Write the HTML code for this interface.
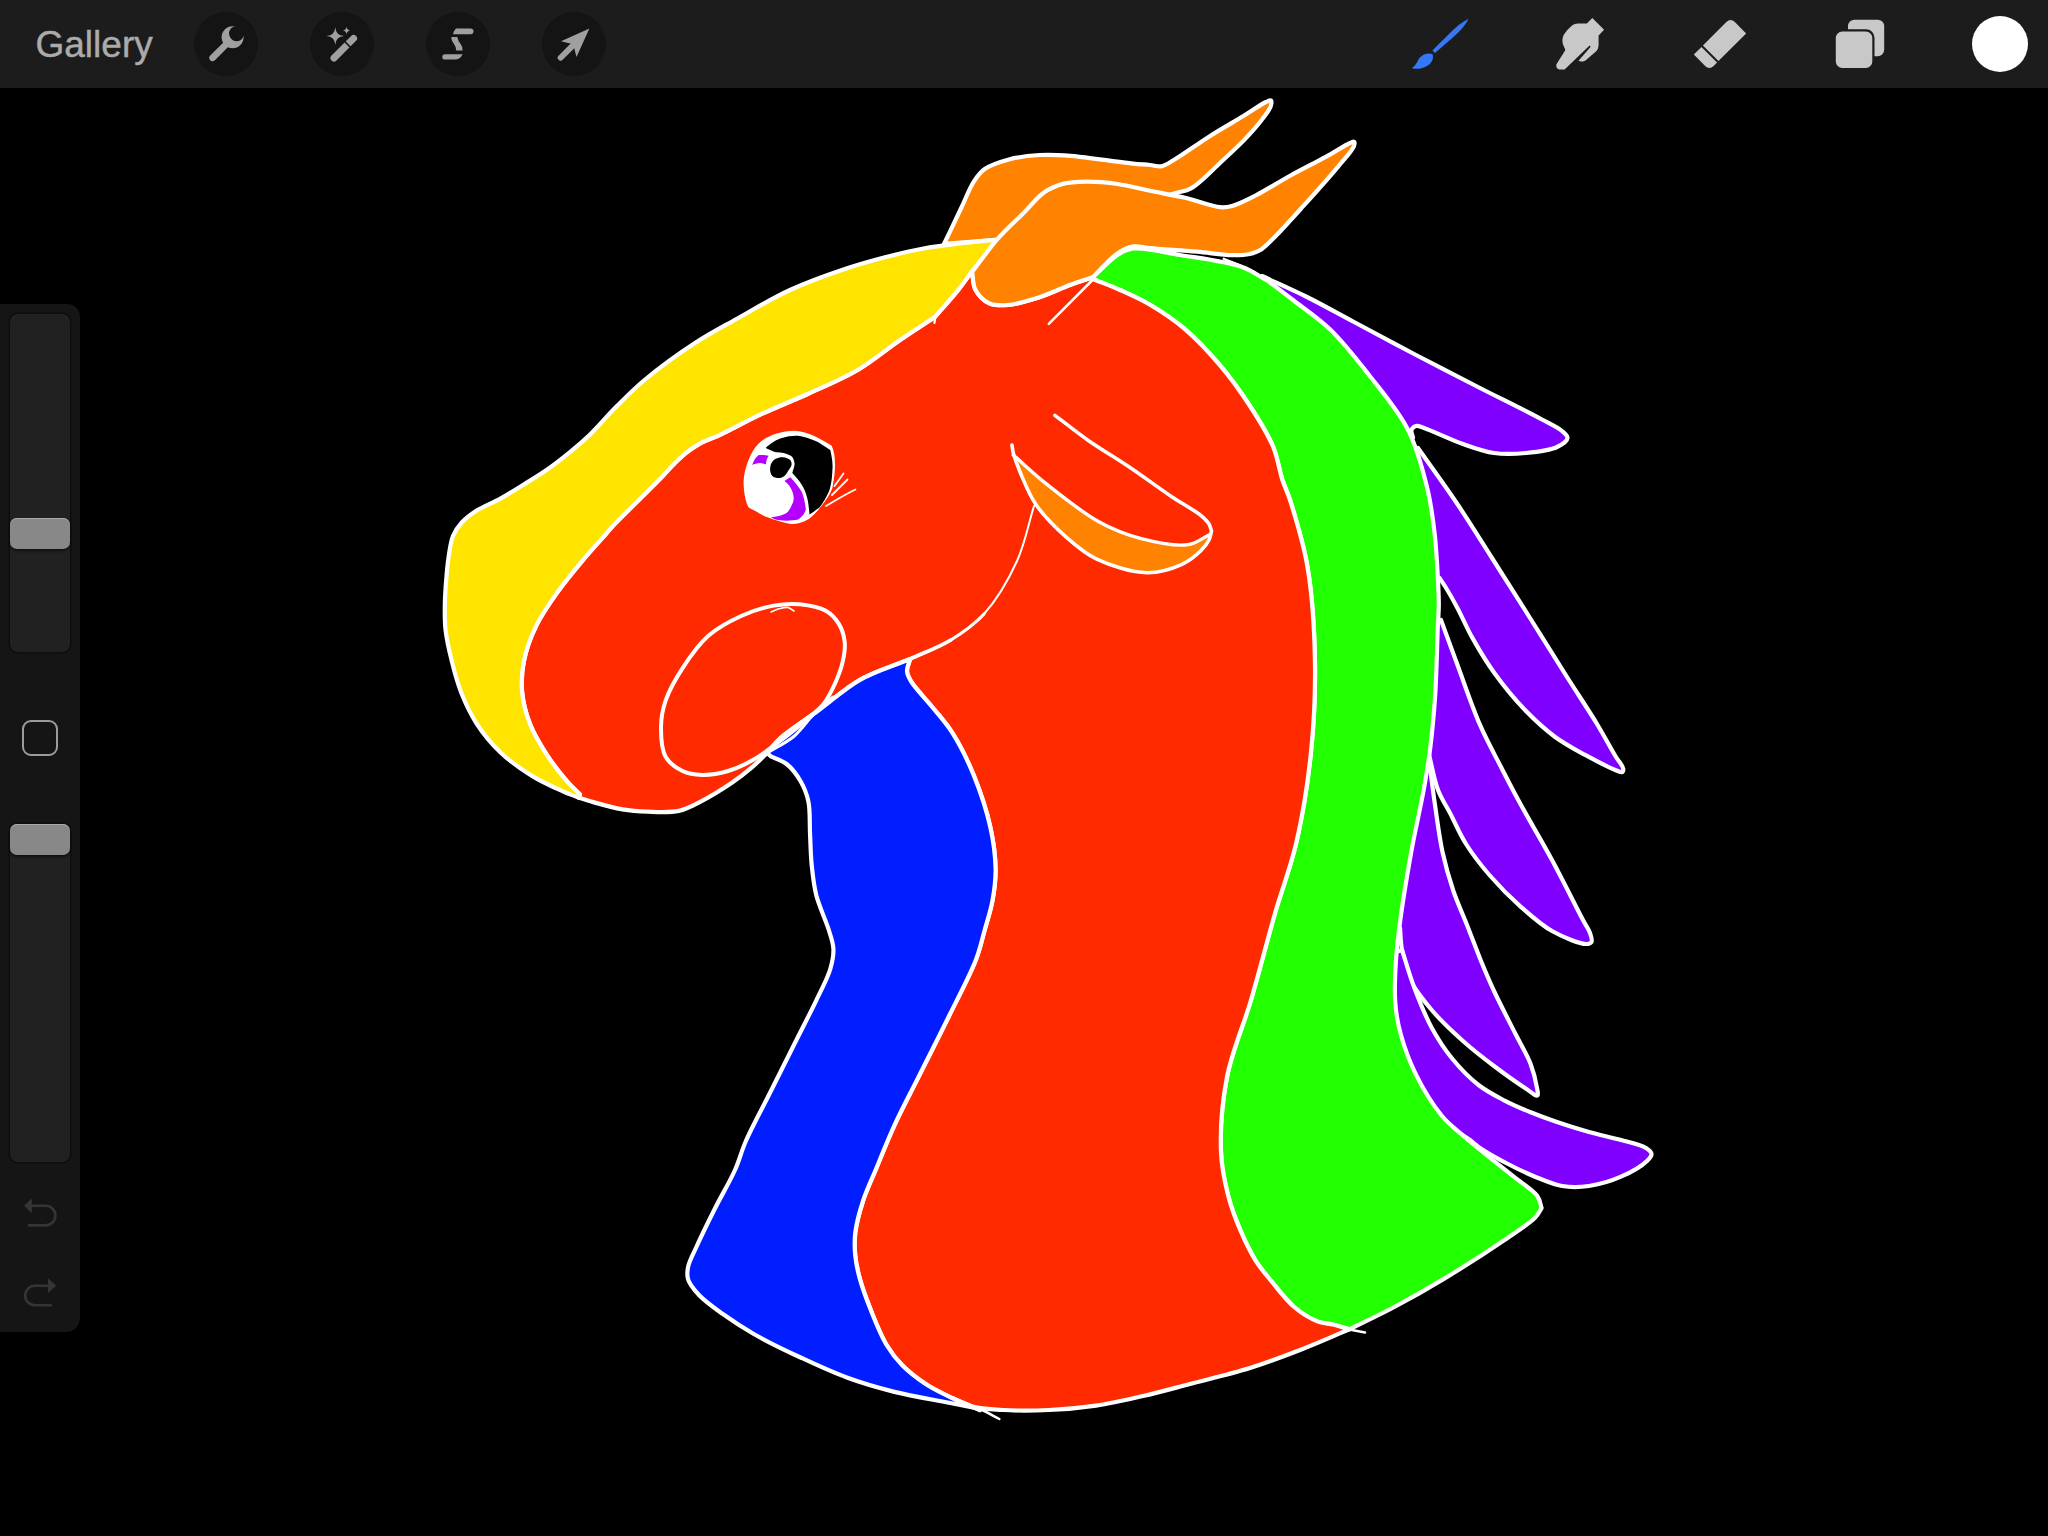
<!DOCTYPE html>
<html><head><meta charset="utf-8">
<style>
html,body{margin:0;padding:0;background:#000;width:2048px;height:1536px;overflow:hidden}
.top{position:absolute;left:0;top:0;width:2048px;height:88px;background:#1c1c1c}
.gal{position:absolute;left:35.5px;top:23px;font-family:"Liberation Sans",sans-serif;font-size:37px;color:#ababab;line-height:44px;white-space:nowrap;-webkit-text-stroke:0.45px #ababab}
svg{position:absolute;left:0;top:0}
.panel{position:absolute;left:0;top:304px;width:80px;height:1028px;background:#151515;border-radius:0 13px 14px 0}
.track{position:absolute;left:10px;width:60px;height:338px;background:#212121;border-radius:8px;box-shadow:0 0 0 1.5px #0e0e0e}
.thumb{position:absolute;left:10px;width:60px;height:31px;background:#888;border-radius:7px;box-shadow:inset 0 1px 0 #a8a8a8,0 2px 3px rgba(0,0,0,.55)}
.sq{position:absolute;left:22px;top:720px;width:36px;height:36px;box-sizing:border-box;border:2px solid #9c9c9c;border-radius:9px}
</style></head><body>
<div class="top"></div>
<div class="gal">Gallery</div>
<div class="panel"></div>
<div class="track" style="top:314px"></div>
<div class="thumb" style="top:518px"></div>
<div class="sq"></div>
<div class="track" style="top:824px"></div>
<div class="thumb" style="top:824px"></div>
<svg width="2048" height="1536" viewBox="0 0 2048 1536">
<g fill="#141414">
<circle cx="226" cy="44" r="32"/><circle cx="342" cy="44" r="32"/><circle cx="458" cy="44" r="32"/><circle cx="574" cy="44" r="32"/>
</g>
<g fill="#a0a0a0" stroke="none">
<!-- wrench -->
<mask id="wm"><rect x="190" y="10" width="80" height="70" fill="#fff"/><circle cx="236.6" cy="33.6" r="7.6" fill="#000"/></mask>
<circle cx="232.6" cy="37.2" r="11" mask="url(#wm)"/>
<line x1="212.6" y1="57.8" x2="229" y2="41.5" stroke="#a0a0a0" stroke-width="6.6" stroke-linecap="round"/>
<!-- wand -->
<line x1="334" y1="58" x2="353.6" y2="38.4" stroke="#a0a0a0" stroke-width="7" stroke-linecap="round"/>
<line x1="344.6" y1="41.4" x2="350.4" y2="47.2" stroke="#141414" stroke-width="1.6"/>
<path d="M335.3 27.2 Q335.9 35.4 344.1 36 Q335.9 36.6 335.3 44.8 Q334.7 36.6 326.5 36 Q334.7 35.4 335.3 27.2Z"/>
<path d="M346.6 26.6 Q346.9 30.3 350.6 30.6 Q346.9 30.9 346.6 34.6 Q346.3 30.9 342.6 30.6 Q346.3 30.3 346.6 26.6Z"/>
<!-- selection S -->
<path d="M456 28.4 L470.6 28.4 A2.9 2.9 0 0 1 470.6 34.2 L453 34.2 Q454 30 456 28.4Z"/>
<path d="M451.4 37 L457.3 37 Q458 41 460.6 44 Q463 47 462.6 50.6 L456.2 50.6 Q456.5 47.5 454 44 Q451 40 451.4 37Z"/>
<path d="M445 54.2 L462.6 54.2 Q460 59.6 455 59.6 L445 59.6 A2.7 2.7 0 0 1 445 54.2Z"/>
<!-- move arrow -->
<path d="M589.4 28.5 L561 41.3 L573.2 44.2 L576.5 57 Z"/>
<line x1="560.6" y1="57.8" x2="572" y2="46.4" stroke="#a0a0a0" stroke-width="5.8" stroke-linecap="round"/>
</g>
<!-- brush -->
<g fill="#3478f6">
<path d="M1468.3 19 C1467 23 1462 29 1454 36.5 L1435 53 L1432.4 50.6 L1450 33 C1458 25 1464 21 1468.3 19Z"/>
<path d="M1432.6 54.2 C1434.4 60 1430 66.4 1421.5 68.2 C1417 69.2 1413.5 69 1411.8 68.1 C1414.5 66.5 1416.5 63.5 1418 60.5 C1420.5 55.4 1426.5 52.2 1432.6 54.2Z"/>
</g>
<g fill="#c8c8c8">
<!-- smudge -->
<path d="M1559.6 69.4 Q1556 69 1556.3 64.4 L1565.4 50 L1563 44.5 Q1561.5 40.5 1563.6 35 Q1567.5 29 1572 25.4 Q1574.5 23.6 1578 23.6 L1586.8 23.4 L1592.3 18 L1604.1 29.8 L1598.6 35.6 L1598.6 45.4 Q1598.3 49.5 1596.2 51.2 L1585.5 60.4 Q1581 62.6 1578.5 60.8 L1590.3 47.2 Q1591 45.8 1589.6 45.4 L1564.6 69.4 Z"/>
<!-- eraser -->
<g transform="translate(1720,44) rotate(-45)">
<path d="M-26 -11 L-15.2 -11 L-15.2 11 L-20 11 Q-26 11 -26 5Z"/>
<path d="M-13.2 -11 L20 -11 Q26 -11 26 -5 L26 11 L-13.2 11Z"/>
</g>
<!-- layers -->
<rect x="1848" y="19.7" width="36.2" height="36.5" rx="6.5"/>
<rect x="1833.6" y="29.3" width="40.9" height="40.9" rx="8.5" fill="#1c1c1c"/><rect x="1835.8" y="31.5" width="36.5" height="36.5" rx="6.5"/>
</g>
<circle cx="2000" cy="44" r="28" fill="#fff"/>
<!-- undo / redo -->
<g fill="none" stroke="#353535" stroke-width="2.6">
<path d="M30 1205.8 L45.6 1205.8 A9.8 9.8 0 0 1 45.6 1225.4 L28 1225.4"/>
<path d="M50 1285.7 L35 1285.7 A9.8 9.8 0 0 0 35 1305.3 L51.8 1305.3"/>
</g>
<g fill="#353535">
<path d="M24.1 1205.5 L31.8 1198.5 L31.8 1213.2Z"/>
<path d="M56.2 1285.7 L48 1278.3 L48 1293Z"/>
</g>
<path d="M1262 276C1277 283 1291.9 289.5 1307 297C1322.6 304.8 1337.3 313.1 1354 322C1373.2 332.2 1395.2 344.1 1416 355C1436.9 365.9 1458.1 376.8 1479 387.5C1499.7 398.1 1525.9 410.8 1541 419C1549.9 423.8 1557.5 427.1 1562 431C1564.7 433.4 1567.7 435.6 1567.5 438C1567.2 440.9 1561.8 444.7 1557 447C1549.7 450.5 1536.5 452 1526 453C1515.5 454 1504.5 454.5 1494 453C1483.5 451.5 1473.8 447.8 1463 444C1450.6 439.7 1432.2 430.7 1424 428C1420.4 426.8 1418.2 425.5 1416 426C1414.1 426.5 1412.1 428.3 1411.5 430C1410.8 432 1412.5 435 1413 437.5L1390 440L1340 400L1290 320Z" fill="#8000ff" stroke="#fff" stroke-width="4.2" stroke-linejoin="round" stroke-linecap="round"/>
<path d="M1418 448C1431.3 467 1445.4 486.2 1458 505C1470 522.9 1480.4 539.8 1492 558C1504.3 577.4 1517.4 598.1 1530 618C1542.4 637.7 1555.3 658.5 1567 677C1577.5 693.6 1588.3 709.6 1597 724C1604.2 735.9 1611.1 749 1616 757C1618.8 761.7 1622.4 765.1 1623 768C1623.4 769.6 1623.4 771.4 1622.5 772C1621.3 772.8 1618.1 771 1614.7 769.7C1607.9 767 1594.6 760.1 1584.7 754.7C1574.6 749.2 1564.4 743.8 1554.8 736.7C1544.4 729 1534.4 719.8 1524.8 709.8C1514.4 699 1503.8 686.1 1494.9 673.8C1486.4 662.1 1478.9 649.5 1472.4 637.9C1466.6 627.6 1462.2 616.9 1457.4 607.9C1453.3 600.2 1448.9 592.5 1445.5 587C1443.2 583.3 1441.5 581 1439.5 578L1380 560L1380 470Z" fill="#8000ff" stroke="#fff" stroke-width="4.2" stroke-linejoin="round" stroke-linecap="round"/>
<path d="M1441 620C1446.5 634.9 1451.5 648.8 1457.4 664.8C1464.3 683.3 1471.9 706.4 1479.9 724.7C1487 741 1495.2 755.6 1502.4 769.7C1508.8 782.2 1513.9 792 1521 805C1529.9 821.4 1541.8 841.2 1552 860C1562.5 879.5 1576.3 907.3 1583 920C1586.1 925.9 1588.6 929 1590 933C1591.1 936.2 1592.5 940.2 1591.5 942C1590.7 943.4 1588.6 944 1586 944C1579.5 943.9 1562.7 937 1552 931C1540.8 924.7 1530.8 915.6 1520.6 906.6C1509.9 897.1 1498.7 885.8 1489.4 875C1480.7 864.9 1472.7 854.6 1466 844C1459.7 833.9 1455 822.6 1450 813C1445.7 804.8 1441.3 798.7 1438 790C1434.1 779.7 1432 766.5 1429 754.7L1380 740L1400 640Z" fill="#8000ff" stroke="#fff" stroke-width="4.2" stroke-linejoin="round" stroke-linecap="round"/>
<path d="M1430 767.5C1431.7 780 1433.1 791.8 1435 805C1437.2 819.8 1439.3 837.2 1442.5 852C1445.5 865.7 1449.2 878.6 1453.4 891C1457.4 902.8 1462.5 913.6 1467 925C1471.6 936.6 1476 948.7 1480.6 960C1485 970.7 1488.9 980 1494 991C1500.1 1004 1508.5 1020.1 1515 1033C1520.6 1044.1 1526.9 1054.1 1530.6 1064C1533.8 1072.3 1536 1082.2 1537 1088C1537.5 1091.2 1538.7 1094.8 1537.5 1095.5C1535.9 1096.5 1530 1091.3 1525 1088C1516.9 1082.7 1504.2 1073.7 1494 1066C1483.5 1058.1 1473.1 1050.1 1463 1041C1452.3 1031.5 1440.7 1020.5 1431.7 1010C1423.6 1000.5 1415.8 991.3 1410.8 981C1406.1 971.2 1403.8 959.5 1402 950C1400.5 942.1 1400.7 935.3 1400 928L1360 900L1390 790Z" fill="#8000ff" stroke="#fff" stroke-width="4.2" stroke-linejoin="round" stroke-linecap="round"/>
<path d="M1402 950C1406 962.3 1409.3 974.5 1414 987C1419.1 1000.4 1424.9 1015.3 1431.7 1027.7C1437.9 1039.1 1444.6 1049.4 1452.5 1059C1460.3 1068.5 1469.4 1077.9 1478.5 1085C1486.8 1091.5 1495.8 1096 1504.6 1100.6C1513 1105 1521.3 1108.5 1530 1112C1538.8 1115.6 1547.6 1118.8 1557 1122C1567.2 1125.5 1578.3 1129 1589 1132C1599.6 1135 1611 1137.2 1621 1140C1629.9 1142.5 1640.9 1144.7 1646 1148C1648.8 1149.8 1651.3 1151.8 1651.5 1154C1651.7 1156.2 1649.5 1158.5 1647 1161C1642.1 1165.7 1630.4 1172.6 1621 1176.7C1611.1 1181 1599.3 1184.5 1589 1186C1579.7 1187.3 1570.9 1187.5 1562 1186C1552.9 1184.5 1543.9 1180.3 1535 1176.7C1525.9 1173 1516.9 1168.6 1508 1164C1499 1159.4 1488.4 1153.6 1481.5 1149C1476.7 1145.8 1473.8 1143 1470 1140L1380 1080L1370 960Z" fill="#8000ff" stroke="#fff" stroke-width="4.2" stroke-linejoin="round" stroke-linecap="round"/>
<path d="M1093 277C1101.2 269.7 1109.9 259.8 1117.5 255C1122.9 251.6 1126.3 249.4 1133 248.5C1144.3 247 1163.3 252.2 1180 255C1199.3 258.2 1226.1 261.3 1242 267C1252.9 270.9 1259.3 276.3 1268 281C1276.3 287.3 1283.9 292.9 1293 300C1304.2 308.7 1318 317.8 1330 329.3C1343.5 342.3 1356.3 358.8 1369 375C1382.4 392.1 1398.2 410.5 1408 429.7C1417.2 447.9 1422.5 468.7 1427 487C1431 503.3 1432.9 518.3 1434.7 534C1436.5 549.6 1437.3 568.1 1438 581C1438.5 590 1438.8 596.3 1438.8 604C1438.8 611.8 1438.2 617.6 1437.8 627.5C1437.1 644.2 1436.6 673.7 1435.2 695C1433.9 714.3 1432.1 733.2 1430 750C1428.2 764.3 1426.4 774.8 1423.8 789.4C1420.4 807.9 1415.1 830.7 1411.2 852C1407.3 874.2 1402.9 900.3 1400.3 920C1398.3 935.1 1396.9 946.5 1396 960C1395.1 973.7 1394.3 988.8 1395.2 1001.7C1396 1012.9 1397.4 1022 1400.4 1033C1403.9 1046 1409.3 1061.1 1416 1074.6C1423 1088.8 1433.5 1105.6 1442 1116C1448.1 1123.4 1453.6 1127.3 1460 1133C1466.8 1139 1473.6 1144.5 1481.5 1151C1491.1 1158.9 1503.8 1168.7 1513.7 1176.7C1522.2 1183.6 1532.9 1189.7 1537.3 1196C1540.2 1200.1 1540.2 1204 1541.6 1208C1539.5 1211.2 1538.6 1214 1535.2 1217.5C1528.9 1224.1 1515.5 1232.4 1503 1241C1486.2 1252.5 1461.9 1268 1443 1279.4C1426.6 1289.3 1412 1297.6 1396.2 1306C1380.8 1314.3 1365 1321.6 1349.4 1329.4C1344.2 1327.8 1339 1326 1333.8 1324.7C1328.5 1323.4 1323.6 1323.8 1318 1321.6C1310.8 1318.8 1302 1313.6 1294.7 1307.5C1286.3 1300.5 1278.2 1289.4 1271.2 1281C1265.4 1273.9 1260.5 1268.4 1255.6 1260.6C1249.9 1251.5 1244.6 1240.2 1240 1229.4C1235.3 1218.4 1231.1 1207.3 1228 1195C1224.6 1181.6 1221.7 1168.4 1221 1152C1220.1 1130.5 1222.2 1101.9 1227 1077C1232 1051.2 1243.2 1026.4 1251 1000C1259.2 972.2 1266.9 941.5 1274.8 914C1282.1 888.6 1290.8 866.9 1296.7 841C1303.2 812.5 1308.2 780.4 1311.2 749.9C1314.3 719.6 1315.5 689.1 1314.9 658.7C1314.3 628.3 1312.3 595.5 1307.6 567.6C1303.5 543.2 1295 515.8 1290 500C1287.2 491.3 1284.9 487.6 1282.4 480C1279.2 470.3 1277.8 457.9 1273 446.5C1267.4 433.2 1258.3 418.8 1249.6 405.5C1240.7 391.8 1231 378.2 1220.3 365.6C1209.5 352.8 1197.4 339.7 1185.2 329.3C1173.9 319.7 1161.5 311.5 1150 304.7C1139.8 298.7 1129.8 294.4 1120 290C1110.8 285.9 1102 282.7 1093 279Z" fill="#22ff00" stroke="#fff" stroke-width="4.2" stroke-linejoin="round" stroke-linecap="round"/>
<path d="M972.2 272C973.2 277.8 972.6 284.3 975.3 289.4C978.1 294.8 983.8 300.8 989.4 303.4C994.8 305.9 1001 305.5 1008 305C1017.2 304.3 1029.1 300.5 1039.4 297.2C1049.9 293.8 1061 288.3 1070.6 284.7C1078.6 281.7 1085.5 279.6 1093 277L1093 279C1102 282.7 1110.8 285.9 1120 290C1129.8 294.4 1139.8 298.7 1150 304.7C1161.5 311.5 1173.9 319.7 1185.2 329.3C1197.4 339.7 1209.5 352.8 1220.3 365.6C1231 378.2 1240.7 391.8 1249.6 405.5C1258.3 418.8 1267.4 433.2 1273 446.5C1277.8 457.9 1279.2 470.3 1282.4 480C1284.9 487.6 1287.2 491.3 1290 500C1295 515.8 1303.5 543.2 1307.6 567.6C1312.3 595.5 1314.3 628.3 1314.9 658.7C1315.5 689.1 1314.3 719.6 1311.2 749.9C1308.2 780.4 1303.2 812.5 1296.7 841C1290.8 866.9 1282.1 888.6 1274.8 914C1266.9 941.5 1259.2 972.2 1251 1000C1243.2 1026.4 1232 1051.2 1227 1077C1222.2 1101.9 1220.1 1130.5 1221 1152C1221.7 1168.4 1224.6 1181.6 1228 1195C1231.1 1207.3 1235.3 1218.4 1240 1229.4C1244.6 1240.2 1249.9 1251.5 1255.6 1260.6C1260.5 1268.4 1265.4 1273.9 1271.2 1281C1278.2 1289.4 1286.3 1300.5 1294.7 1307.5C1302 1313.6 1310.8 1318.8 1318 1321.6C1323.6 1323.8 1328.5 1323.4 1333.8 1324.7C1339 1326 1344.2 1327.8 1349.4 1329.4C1332.9 1336.3 1316.6 1343.6 1300 1350C1283.5 1356.4 1267.5 1362.5 1250 1368C1231 1373.9 1208.8 1379.1 1190 1384C1173.4 1388.3 1158.7 1392.4 1143 1396C1127.4 1399.6 1111.7 1403.3 1096 1405.6C1080.4 1407.9 1064.6 1409.3 1049 1410C1033.5 1410.7 1016.5 1410.8 1002.5 1410C991 1409.3 980 1408.8 971 1406.4C963.7 1404.4 958.3 1400.8 952 1398L980 1410C970.7 1406 961.1 1402.4 952 1398C943 1393.7 933.9 1389.4 925.6 1384C917.3 1378.5 908.9 1372.1 902.2 1365.3C896 1359 891.4 1353 886.6 1345C880.8 1335.3 875.5 1321.9 871 1310.6C866.8 1300 862.7 1289.1 860 1279.4C857.7 1271.1 856.1 1263.8 855.3 1256C854.5 1248.2 854.3 1240.8 855.3 1232.5C856.5 1222.7 859.7 1211.3 863 1201C866.4 1190.5 870.9 1181.3 875.6 1170C881.2 1156.4 887.5 1140.3 894.4 1125.3C901.5 1109.7 909.4 1095.1 917.8 1078.4C927.4 1059.1 939.1 1036.3 949 1016C958.4 996.9 969.8 975.7 975.8 960C980 949.2 981.5 941.4 984.2 931.7C987.1 921.5 990.6 910.9 992.5 900.4C994.4 890.1 995.7 880.3 995.6 869.2C995.4 856.3 993.6 842 990.4 827.5C986.8 810.9 980.3 791.6 973.8 775.4C967.7 760.5 960.6 745.8 953 733.8C946.5 723.4 939.1 715.5 932 706.7C925.1 698.1 915.3 688.5 911.2 681.7C908.8 677.7 907.2 674.9 907 671.2C906.7 667.4 909.1 663.1 910.2 659C893.5 665.9 875.4 671.1 860 679.8C845.2 688.2 832.7 699.9 819.3 709.8C806.1 719.5 789.5 730 780.2 738.4C774.3 743.7 771.4 748.1 767 753C762.1 757.7 757.7 762.5 752.2 767.2C746.1 772.4 739.6 777.6 731.9 782.8C722.7 789 710.3 796.7 700.6 801.6C692.8 805.6 686.9 809.1 678.8 810.9C669.5 812.9 657.3 812 647.5 811.7C638.7 811.4 631.2 810.9 622.5 809.4C612.6 807.7 599.4 803.9 591.3 801.6C586 800.1 582.7 798.9 578.4 797.5L580 794.4C575.8 790.2 572 787 567.5 781.9C561.3 774.8 553.4 764.8 547.2 755.3C540.8 745.5 534.2 734.7 530 724C526 713.8 523.2 703.3 522.2 692.8C521.2 682.5 521.7 672.2 523.8 661.6C526.1 649.9 530.7 637.1 536.3 625.6C542.1 613.7 550.3 602.3 558.1 591.3C565.9 580.4 575.1 569.5 583.1 560C590 551.7 597.2 543.9 603.1 537.2C607.7 531.9 611.1 527.8 615.6 523.1C620.5 518 626 512.7 631.2 507.5C636.5 502.3 641.7 497.1 646.9 491.9C652.1 486.7 657.7 481.2 662.5 476.2C666.7 471.9 670.2 467.7 674.2 463.8C678.1 459.9 681.6 456.2 686 452.8C690.7 449.1 696.1 445.7 701.6 442.7C707.4 439.6 712.7 438.2 720 434.8C731 429.7 746.5 421 760.6 414.4C775.6 407.4 791.7 401.2 807.5 394C824 386.5 842 379.2 857.7 370C872.8 361.1 886.5 349.3 900 340C912.2 331.6 923.5 324.5 935.2 316.7C943 307.6 952 297.7 958.6 289.4C963.9 282.8 967.7 277.1 972.2 271Z" fill="#ff2a00" stroke="#fff" stroke-width="4.2" stroke-linejoin="round" stroke-linecap="round"/>
<path d="M767 753C771.4 748.1 774.3 743.7 780.2 738.4C789.5 730 806.1 719.5 819.3 709.8C832.7 699.9 845.2 688.2 860 679.8C875.4 671.1 893.5 665.9 910.2 659C909.1 663.1 906.7 667.4 907 671.2C907.2 674.9 908.8 677.7 911.2 681.7C915.3 688.5 925.1 698.1 932 706.7C939.1 715.5 946.5 723.4 953 733.8C960.6 745.8 967.7 760.5 973.8 775.4C980.3 791.6 986.8 810.9 990.4 827.5C993.6 842 995.4 856.3 995.6 869.2C995.7 880.3 994.4 890.1 992.5 900.4C990.6 910.9 987.1 921.5 984.2 931.7C981.5 941.4 980 949.2 975.8 960C969.8 975.7 958.4 996.9 949 1016C939.1 1036.3 927.4 1059.1 917.8 1078.4C909.4 1095.1 901.5 1109.7 894.4 1125.3C887.5 1140.3 881.2 1156.4 875.6 1170C870.9 1181.3 866.4 1190.5 863 1201C859.7 1211.3 856.5 1222.7 855.3 1232.5C854.3 1240.8 854.5 1248.2 855.3 1256C856.1 1263.8 857.7 1271.1 860 1279.4C862.7 1289.1 866.8 1300 871 1310.6C875.5 1321.9 880.8 1335.3 886.6 1345C891.4 1353 896 1359 902.2 1365.3C908.9 1372.1 917.3 1378.5 925.6 1384C933.9 1389.4 943 1393.7 952 1398C961.1 1402.4 970.7 1406 980 1410L980 1409C969.7 1406.9 960.8 1405.2 949 1402.8C933.4 1399.7 911.8 1396.2 894.4 1391.9C878.1 1387.8 863 1383.5 847.5 1377.8C831.7 1372 816.1 1364.7 800.6 1357.5C784.9 1350.2 767.6 1341.9 753.8 1334C742.1 1327.3 732 1320.6 722.5 1313.8C713.9 1307.6 705 1301.4 699 1295C694.2 1289.9 689.7 1284.6 688.1 1279.4C686.8 1275.2 687.2 1271.4 688.1 1266.9C689.2 1261.1 692.6 1255.4 695.9 1248C700.7 1237.3 708.2 1222 714.7 1209C721.2 1195.9 729.6 1182.2 735 1170C739.6 1159.8 741.2 1151.7 745.9 1141C752 1127.1 761.6 1109.6 769.4 1094C777.2 1078.4 785 1062.8 792.8 1047.2C800.6 1031.6 809.6 1014.4 816.3 1000.3C821.7 988.9 827.5 978.5 830.3 969C832.5 961.7 833.7 955.4 833.4 948.8C833.1 942.4 831 937.2 828.8 930C825.8 920.1 819.2 906.7 816.3 895.3C813.6 884.7 812.7 874.5 811.6 864C810.6 853.6 810.5 843.2 810 832.8C809.5 822.4 810.3 810.8 808.4 801.6C806.8 794 804.2 787.5 800.6 781.3C797 775 791.9 768.2 786.6 764C781.9 760.2 776.1 758.9 770.9 756.3Z" fill="#001eff" stroke="#fff" stroke-width="4.2" stroke-linejoin="round" stroke-linecap="round"/>
<path d="M944 244C949.8 232 956 219.1 961.2 208C965.8 198.5 969.2 188.6 973.8 181.6C977.2 176.3 979.8 172.4 984.7 169C990.7 164.8 999.5 162 1008 159.7C1017.6 157.1 1028.9 155.6 1039.4 155C1049.8 154.4 1060.2 155 1070.6 155.8C1081 156.6 1091.5 158.4 1101.9 159.7C1112.3 161 1124.2 162.7 1133 163.6C1139.5 164.3 1144.9 164.5 1150 165C1154.3 165.4 1157.9 166.9 1161.7 166.2C1165.7 165.5 1168.6 163.1 1173.4 160.3C1182.1 155.2 1196.8 144.4 1208.6 136.9C1220.2 129.5 1233.4 122.1 1243.8 115.8C1252 110.7 1261.1 104.2 1266 102C1268.2 101 1270.2 99.9 1271 100.5C1271.9 101.2 1271.4 104.1 1270.7 106.4C1269.4 110.2 1265.1 115.5 1261.3 120.5C1256.5 126.7 1250.2 133.7 1243.8 140.4C1236.6 147.8 1228.6 155.1 1220.3 162.7C1211.2 171.1 1199.7 183.6 1191 188.4C1185.5 191.5 1182.5 191 1175.8 193C1163 196.9 1140.2 203.2 1120 210C1095.6 218.3 1062.7 235.9 1040 240C1024.1 242.9 1012.9 239.5 998 240C981.1 240.6 962 242.7 944 244Z" fill="#ff8200" stroke="#fff" stroke-width="4.2" stroke-linejoin="round" stroke-linecap="round"/>
<path d="M998.8 239.4C985.8 240.8 972.5 242 960 243.5C948.3 244.9 937.8 245.9 926 248C912.9 250.3 898.8 253.7 885 257.3C870.8 261 856.9 264.9 842 270C825.4 275.6 807.2 282.1 790 290C772 298.3 753.1 309.7 736.5 319C721.7 327.3 709.3 333.7 695 343C678.7 353.6 658.5 368.4 644.5 380C633.7 389 626.2 396.8 617.2 405.8C607.9 415 598.3 426.5 589.8 434.7C582.9 441.3 577.2 446.2 570.3 451.9C563 457.9 554.8 464.3 546.9 469.8C539.2 475.2 531.3 479.9 523.4 484.7C515.6 489.5 507.9 494.4 500 498.8C492.1 503.1 482.8 506.6 476 511C470.4 514.6 465.7 518.2 461.8 522.5C458.1 526.6 455.2 530.7 453 536C450.5 542.2 449.6 550.4 448.5 557.7C447.4 565.1 446.8 572.2 446.2 580C445.5 588.5 444.9 598.2 444.8 606.9C444.7 615 444.6 622 445.6 630.3C446.7 640 449.3 651.2 451.9 661.6C454.5 672.1 457.2 682.6 461.3 692.8C465.5 703.4 470.5 714.2 476.9 724C483.4 734 491.4 743.7 500.3 752.2C509.5 761 520.9 769 531.6 775.6C541.7 781.9 554.1 787.4 562.8 791.3C568.8 794 573.2 795.4 578.4 797.5L580 794.4C575.8 790.2 572 787 567.5 781.9C561.3 774.8 553.4 764.8 547.2 755.3C540.8 745.5 534.2 734.7 530 724C526 713.8 523.2 703.3 522.2 692.8C521.2 682.5 521.7 672.2 523.8 661.6C526.1 649.9 530.7 637.1 536.3 625.6C542.1 613.7 550.3 602.3 558.1 591.3C565.9 580.4 575.1 569.5 583.1 560C590 551.7 597.2 543.9 603.1 537.2C607.7 531.9 611.1 527.8 615.6 523.1C620.5 518 626 512.7 631.2 507.5C636.5 502.3 641.7 497.1 646.9 491.9C652.1 486.7 657.7 481.2 662.5 476.2C666.7 471.9 670.2 467.7 674.2 463.8C678.1 459.9 681.6 456.2 686 452.8C690.7 449.1 696.1 445.7 701.6 442.7C707.4 439.6 712.7 438.2 720 434.8C731 429.7 746.5 421 760.6 414.4C775.6 407.4 791.7 401.2 807.5 394C824 386.5 842 379.2 857.7 370C872.8 361.1 886.5 349.3 900 340C912.2 331.6 923.5 324.5 935.2 316.7C943 307.6 952 297.7 958.6 289.4C963.9 282.8 967.7 277.1 972.2 271Z" fill="#ffe400" stroke="#fff" stroke-width="4.2" stroke-linejoin="round" stroke-linecap="round"/>
<path d="M972.2 272C980.5 261.1 988.4 249.5 997.2 239.4C1005.6 229.8 1015.5 221.1 1023.8 212.8C1031 205.6 1036.9 197.4 1044 192.5C1050 188.3 1056 185.7 1062.8 183.9C1070 181.9 1077.9 181.7 1086.2 181.6C1095.9 181.5 1107 182.5 1117.5 184C1128.3 185.5 1138.9 188.5 1150 190.8C1161.5 193.1 1173.5 195.1 1185.2 197.8C1197 200.5 1211.7 206.5 1220.3 207.2C1225.2 207.6 1227.5 207.2 1232 206C1238.6 204.2 1247 199.8 1255.5 195.5C1266.2 190.1 1278.8 182 1290.6 175.5C1302.3 169.1 1315.2 162.6 1325.8 156.8C1334.7 151.9 1345.3 145.2 1350 143C1351.8 142.2 1353.3 141.1 1354 141.6C1354.7 142.1 1354.6 144.3 1353.9 146.2C1352.2 150.9 1344.1 159.3 1337.5 167.3C1328.1 178.6 1313.6 194.7 1302.3 207.2C1292.2 218.4 1280.7 231.2 1273 238.8C1268.3 243.4 1265.4 246.8 1261.3 249.4C1257.6 251.7 1254 253 1249.6 254C1244.4 255.2 1238.9 255.3 1232 255.2C1222.3 255 1209.5 252.8 1196.9 251.7C1182.4 250.4 1161.7 249.3 1150 248.2C1142.9 247.6 1138.4 245.5 1133 246.4C1127.6 247.3 1122.9 249.7 1117.5 253.4C1109.8 258.6 1101.2 269.1 1093 277C1085.5 279.6 1078.6 281.7 1070.6 284.7C1061 288.3 1049.9 293.8 1039.4 297.2C1029.1 300.5 1017.2 304.3 1008 305C1001 305.5 994.8 305.9 989.4 303.4C983.8 300.8 978.1 294.8 975.3 289.4C972.6 284.3 973.2 277.8 972.2 272Z" fill="#ff8200" stroke="#fff" stroke-width="4.2" stroke-linejoin="round" stroke-linecap="round"/>
<path d="M1013.3 455C1024.4 464.7 1034.1 474.2 1046.7 484.2C1061.9 496.3 1081.8 512.4 1098.8 521.7C1112.9 529.5 1125.8 534.5 1140.4 538.3C1155.6 542.3 1175.8 546.5 1188.3 544.6C1196.9 543.3 1202.1 538.2 1209 535L1211.5 531C1210.7 534 1210.5 537 1209 540C1207.2 543.6 1204.4 547.3 1200.8 550.8C1196.1 555.4 1189.7 560.9 1182 564.4C1172.4 568.8 1159.5 572.9 1146.7 572.7C1131.5 572.5 1110.7 565.8 1096.7 559.2C1085.1 553.7 1077 546.6 1067.5 538.3C1056.8 528.9 1044.2 516.5 1036.2 505C1029.3 495 1025 483.6 1021 474.2C1017.7 466.5 1014.7 458.3 1013.3 452.9C1012.5 449.7 1012.4 447.6 1012 445Z" fill="#ff8200"/>
<path d="M1055 415.4C1066.1 423.7 1076.4 432.1 1088.3 440.4C1101.3 449.5 1116.2 458.2 1130 467.5C1144 476.9 1159 488.2 1171.7 496.7C1182.2 503.7 1194.3 510 1200.8 515.4C1204.6 518.6 1207.2 521.1 1209 524C1210.4 526.3 1210.7 528.7 1211.5 531C1210.7 534 1210.5 537 1209 540C1207.2 543.6 1204.4 547.3 1200.8 550.8C1196.1 555.4 1189.7 560.9 1182 564.4C1172.4 568.8 1159.5 572.9 1146.7 572.7C1131.5 572.5 1110.7 565.8 1096.7 559.2C1085.1 553.7 1077 546.6 1067.5 538.3C1056.8 528.9 1044.2 516.5 1036.2 505C1029.3 495 1025 483.6 1021 474.2C1017.7 466.5 1014.7 458.3 1013.3 452.9C1012.5 449.7 1012.4 447.6 1012 445" fill="none" stroke="#fff" stroke-width="3.6" stroke-linejoin="round" stroke-linecap="round"/>
<path d="M1013.3 455C1024.4 464.7 1034.1 474.2 1046.7 484.2C1061.9 496.3 1081.8 512.4 1098.8 521.7C1112.9 529.5 1125.8 534.5 1140.4 538.3C1155.6 542.3 1175.8 546.5 1188.3 544.6C1196.9 543.3 1202.1 538.2 1209 535" fill="none" stroke="#fff" stroke-width="3.4" stroke-linejoin="round" stroke-linecap="round"/>
<path d="M799.7 604.3C808.5 605.2 819 606.9 825.8 610.8C831.4 614 835.7 618.8 838.8 623.9C842 629.1 844 635.8 844.7 642C845.4 648.3 844.2 655 842.7 661.6C841.1 668.9 838.1 676.6 834.9 683.8C831.6 691 828 698.5 823.2 704.6C818.5 710.6 812.6 714.7 806.2 720.2C798.6 726.8 789 734.4 780.2 741C771.6 747.4 763.1 754.2 754.2 759.3C745.7 764.1 737 768.4 728.1 771C719.6 773.5 710.1 775.1 702.1 774.9C695.1 774.7 688.5 773.9 682.6 771C676.3 768 669.3 763.2 665.6 756.7C661.3 749.1 660.9 736.3 661 726.7C661.1 717.7 662.6 709.6 665.6 700.7C669.2 690.2 675.7 678.6 682.6 668.1C689.9 656.9 698.6 644.4 708.6 635.6C718.2 627.2 730 621.1 741.1 616C751.7 611.2 763.3 607.5 773.7 605.6C782.7 604 791.1 603.5 799.7 604.3Z" fill="none" stroke="#fff" stroke-width="4.0" stroke-linejoin="round" stroke-linecap="round"/>
<path d="M910.2 659C923.7 652.7 938.3 647.7 950.8 640C962.9 632.6 973.8 625.3 984 614C996.4 600.2 1008.6 579.4 1017 561C1025.1 543.3 1028.3 524.3 1034 506" fill="none" stroke="#fff" stroke-width="2.0" stroke-linejoin="round" stroke-linecap="round"/>
<path d="M910.2 659C923.7 652.7 938.3 647.7 950.8 640C962.9 632.6 973.8 625.3 984 614" fill="none" stroke="#fff" stroke-width="3.2" stroke-linejoin="round" stroke-linecap="round"/>
<path d="M910.2 659C923.7 652.7 938.3 647.7 950.8 640" fill="none" stroke="#fff" stroke-width="3.8" stroke-linejoin="round" stroke-linecap="round"/>
<path d="M1048.8 323.8C1063.3 309.2 1077.9 294.6 1092.5 280" fill="none" stroke="#fff" stroke-width="2.5" stroke-linejoin="round" stroke-linecap="round"/>
<path d="M1223.8 258.8C1232.4 262.5 1241.8 266 1249.6 270C1256.4 273.5 1261.9 277.3 1268 281" fill="none" stroke="#fff" stroke-width="2.5" stroke-linejoin="round" stroke-linecap="round"/>
<path d="M767 753C776.1 747.3 786.1 743 794.4 736C803.1 728.6 810.5 716.3 817.8 709.4C823.3 704.2 828.2 701.1 833.4 697" fill="none" stroke="#fff" stroke-width="3.0" stroke-linejoin="round" stroke-linecap="round"/>
<path d="M935.2 316.7C935 318.8 934.7 320.9 934.5 323" fill="none" stroke="#fff" stroke-width="2.2" stroke-linejoin="round" stroke-linecap="round"/>
<path d="M952 1398C961.3 1401.7 971.6 1405.2 980 1409C987.1 1412.2 992.9 1415.7 999.4 1419" fill="none" stroke="#fff" stroke-width="2.5" stroke-linejoin="round" stroke-linecap="round"/>
<path d="M1349.4 1329.4C1354.6 1330.4 1359.8 1331.5 1365 1332.5" fill="none" stroke="#fff" stroke-width="2.5" stroke-linejoin="round" stroke-linecap="round"/>
<path d="M771 612C774 610.8 777 609.2 780 608.5C782.7 607.8 785.6 607 788 607.5C790.2 608 792 609.8 794 611" fill="none" stroke="#fff" stroke-width="1.6" stroke-linejoin="round" stroke-linecap="round"/>
<g>
<path d="M743.6 480.9 C744 470 750 452 758.7 443.6 C766 436 780 431 794.5 430.7 C806 431 822 439 831.7 445.8 C836 455 836 470 832.4 488 C829 498 816 514 808.8 518.9 C802 523 796 524 790.9 523.9 C784 523 764 517 758.7 513.1 C754 510 748 508 747.9 506 C745 500 743.5 490 743.6 480.9Z" fill="#fff"/>
<path d="M765.8 447.9 C770 444 776 440 780.1 438.6 C788 436 794 435.5 798 435.8 C806 437 814 440 819.5 442.9 C824 446 828 448 830.3 450.1 C832 458 833 464 832.4 470.1 C832 480 831 486 828.9 491.6 C826 498 823 503 819.5 507.4 C816 510 812 513 809.5 514.6 C809 509 808.5 503 807.4 498.8 C806 493 804 488 801.6 484.5 C799 480 795 476 792.3 473 C793 470 795 466 794.5 463 C794 460 793 457 790.9 455.8 C786 453 780 452 775.8 452.2 C772 451 768 449 765.8 447.9Z" fill="#000"/>
<path d="M771.5 463C772.5 461.2 774 459.7 775.8 458.7C777.8 457.6 780.6 457 783 457.2C785.4 457.4 788.8 458.6 790.2 460.1C791.3 461.2 791.7 462.9 791.6 464.4C791.5 466.2 789.9 468.2 788.7 470.1C787.5 472.1 786.2 474.6 784.4 475.9C782.8 477.1 780.7 478 778.7 478C776.6 478 773.7 477.3 772.3 475.9C770.9 474.6 770.3 472.2 770.1 470.1C769.9 467.9 770.5 464.9 771.5 463Z" fill="#000"/>
<path d="M784.4 480.9 C788 483 791 487 792.3 491.6 C794 496 794 499 793 502.4 C791 507 789 511 786.6 513.1 C782 516 776 517 770.8 517.4 C774 519 777 520 780.1 520.3 C786 521 794 520.5 798 519.6 C802 517 805 513 805.9 509.5 C805 503 804 497 801.6 491.6 C798 486 794 481 790.2 477.3Z" fill="#b400ff"/>
<path d="M752.2 465.1 C754 460 756 457 758.7 455.1 C762 455 766 455.3 768.7 455.8 C767 458 766.3 461 765.8 464.4 C764 463.5 762 463 760.1 463 C757 463 754 464 752.2 465.1Z" fill="#b400ff"/>
<g stroke="#fff" stroke-width="1.8" stroke-linecap="round" fill="none">
<path d="M834.5 486 L843.5 473.5"/>
<path d="M832 495 L847.5 479.5"/>
<path d="M826 506 C836 500 846 494 855.4 489.5"/>
</g>
</g>
</svg>
</body></html>
